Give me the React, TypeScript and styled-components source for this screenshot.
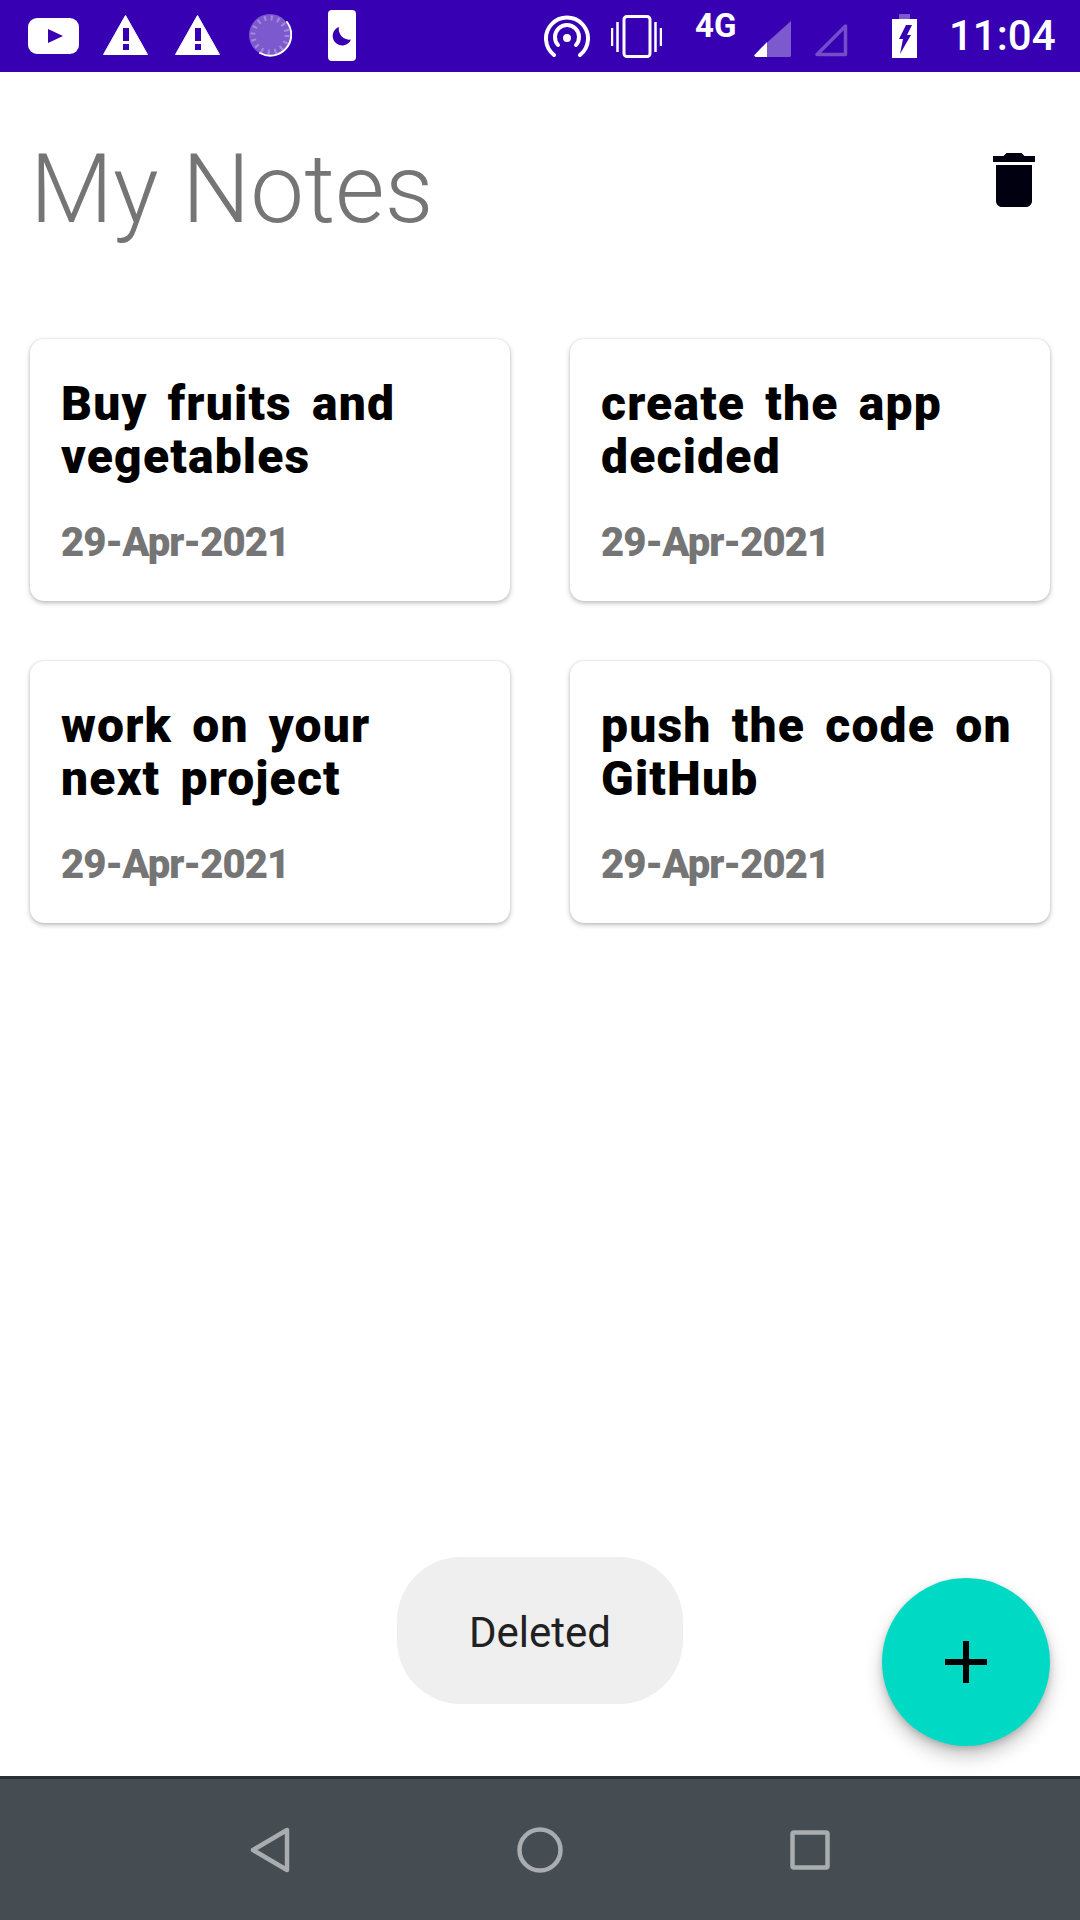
import React from 'react';
import styled, { createGlobalStyle } from 'styled-components';

const notes = [
  { title: 'Buy fruits and vegetables', date: '29-Apr-2021' },
  { title: 'create the app decided', date: '29-Apr-2021' },
  { title: 'work on your next project', date: '29-Apr-2021' },
  { title: 'push the code on GitHub', date: '29-Apr-2021' },
];

const WarningIcon: React.FC<{ $gap: number }> = ({ $gap }) => (
  <StatusIcon $gap={$gap} width={45} height={72} viewBox="0 0 45 72">
    <path d="M22.5 15.500L44.500 54.500H0.500Z" fill="#fff" stroke="#fff" strokeWidth="1" strokeLinejoin="round" />
    <path d="M20 28h6v13h-6zM20 44h6v6h-6z" fill="#3700b3" />
  </StatusIcon>
);

const StatusBar: React.FC = () => (
  <StyledStatusBar>
    <IconGroup>
      <StatusIcon $gap={0} width={51} height={72} viewBox="0 0 51 72">
        <rect x="0" y="18" width="51" height="36" rx="9" fill="#fff" />
        <path d="M20 29l15 7-15 7z" fill="#3700b3" />
      </StatusIcon>
      <WarningIcon $gap={24} />
      <WarningIcon $gap={27} />
      <StatusIcon $gap={29} width={43} height={72} viewBox="0 0 43 72">
        <circle cx="21" cy="35" r="21" fill="#fff" fillOpacity="0.35" />
        <circle cx="21" cy="35" r="17" fill="none" stroke="#fff" strokeOpacity="0.3" strokeWidth="5" strokeDasharray="2 4.7" />
        <path d="M38 22a21 21 0 0 1-27 31" fill="none" stroke="#fff" strokeWidth="2" strokeLinecap="round" />
      </StatusIcon>
      <StatusIcon $gap={36} width={28} height={72} viewBox="0 0 28 72">
        <rect x="0" y="10" width="28" height="51" rx="4" fill="#fff" />
        <path d="M11 27a9.500 9.500 0 1 0 12 12.500a10.500 10.500 0 0 1-12-12.500z" fill="#3700b3" />
      </StatusIcon>
    </IconGroup>
    <IconGroup>
      <StatusIcon $gap={0} width={46} height={72} viewBox="0 0 46 72">
        <g fill="none" stroke="#fff" strokeWidth="4" strokeLinecap="round">
          <path d="M10 55a21 21 0 1 1 26 0" />
          <path d="M14 45a12 12 0 1 1 18 0" />
        </g>
        <circle cx="23" cy="38" r="4" fill="#fff" />
      </StatusIcon>
      <StatusIcon $gap={21} width={51} height={72} viewBox="0 0 51 72">
        <rect x="13" y="16.500" width="26" height="40" rx="3" fill="none" stroke="#fff" strokeWidth="3" />
        <path d="M1 28v18M6.500 22v30M44.500 22v30M50 28v18" stroke="#fff" strokeWidth="2.500" />
      </StatusIcon>
      <NetworkLabel>4G</NetworkLabel>
      <StatusIcon $gap={17} width={37} height={72} viewBox="0 0 37 72">
        <path d="M37 21v34.500a1.500 1.500 0 0 1-1.500 1.500H13V42.500Z" fill="#fff" fillOpacity="0.35" />
        <path d="M0 55.500L13 42v15H1.500z" fill="#fff" />
      </StatusIcon>
      <StatusIcon $gap={20} width={37} height={72} viewBox="0 0 37 72">
        <path d="M34.500 26v28.500H6Z" fill="none" stroke="#fff" strokeOpacity="0.3" strokeWidth="3.500" strokeLinejoin="round" />
      </StatusIcon>
      <StatusIcon $gap={44} width={25} height={72} viewBox="0 0 25 72">
        <rect x="7" y="14" width="11" height="5" fill="#fff" fillOpacity="0.35" />
        <rect x="0" y="19" width="25" height="39" fill="#fff" />
        <path d="M14 25h6l-5 10h4L8 54l3-15H7z" fill="#3700b3" />
      </StatusIcon>
      <Clock>11:04</Clock>
    </IconGroup>
  </StyledStatusBar>
);

const NavBar: React.FC = () => (
  <StyledNavBar>
    <svg width="40" height="46" viewBox="0 0 40 46">
      <path d="M37 3v40L3 23Z" fill="none" stroke="#a9adb0" strokeWidth="4.500" strokeLinejoin="round" />
    </svg>
    <svg width="46" height="46" viewBox="0 0 46 46">
      <circle cx="23" cy="23" r="20.500" fill="none" stroke="#a9adb0" strokeWidth="4.500" />
    </svg>
    <svg width="40" height="40" viewBox="0 0 40 40">
      <rect x="2.500" y="2.500" width="35" height="35" rx="1.500" fill="none" stroke="#a9adb0" strokeWidth="4.500" />
    </svg>
  </StyledNavBar>
);

const App: React.FC = () => {
  return (
    <Page>
      <GlobalStyle />
      <StatusBar />
      <Main>
        <Header>
          <Title>My Notes</Title>
          <TrashIcon width="72" height="72" viewBox="0 0 24 24">
            <path
              d="M6 19c0 1.100.9 2 2 2h8c1.100 0 2-.9 2-2V7H6v12zM19 4h-3.500l-1-1h-5l-1 1H5v2h14V4z"
              fill="#000010"
            />
          </TrashIcon>
        </Header>
        <NotesGrid>
          {notes.map((note) => (
            <NoteCard key={note.title}>
              <NoteTitle>{note.title}</NoteTitle>
              <NoteDate>{note.date}</NoteDate>
            </NoteCard>
          ))}
        </NotesGrid>
        <Toast>Deleted</Toast>
        <Fab>
          <svg width="42" height="42" viewBox="0 0 42 42">
            <path d="M18 0h6v18h18v6H24v18h-6V24H0v-6h18z" fill="#000" />
          </svg>
        </Fab>
      </Main>
      <NavBar />
    </Page>
  );
};

const GlobalStyle = createGlobalStyle`
  html, body {
    margin: 0;
    padding: 0;
    background: #fff;
  }
  body {
    font-family: Roboto, sans-serif;
  }
`;

const Page = styled.div`
  display: flex;
  flex-direction: column;
  width: 1080px;
  height: 1920px;
  overflow: hidden;
`;

const StyledStatusBar = styled.div`
  display: flex;
  align-items: center;
  justify-content: space-between;
  height: 72px;
  padding: 0 25px 0 28px;
  background: #3700b3;
`;

const IconGroup = styled.div`
  display: flex;
  align-items: center;
`;

const StatusIcon = styled.svg<{ $gap: number }>`
  display: block;
  flex: none;
  margin-left: ${(p) => p.$gap}px;
`;

const NetworkLabel = styled.span`
  flex: none;
  width: 42px;
  margin: -20px 0 0 33px;
  color: #fff;
  font-size: 33px;
  font-weight: 700;
  line-height: 36px;
`;

const Clock = styled.span`
  flex: none;
  width: 106px;
  margin-left: 32px;
  color: #fff;
  font-size: 42px;
  font-weight: 500;
  line-height: 50px;
  white-space: nowrap;
`;

const Main = styled.main`
  position: relative;
  flex: 1;
  min-height: 0;
`;

const Header = styled.header`
  display: flex;
  align-items: flex-start;
  justify-content: space-between;
  height: 267px;
  padding: 61px 30px 0;
  box-sizing: border-box;
`;

const Title = styled.h1`
  margin: 0;
  color: #757575;
  font-size: 96px;
  font-weight: 300;
  line-height: 112px;
`;

const TrashIcon = styled.svg`
  margin-top: 11px;
`;

const NotesGrid = styled.div`
  display: grid;
  grid-template-columns: repeat(2, 480px);
  gap: 60px;
  padding: 0 30px;
`;

const NoteCard = styled.article`
  display: flex;
  flex-direction: column;
  height: 262px;
  padding: 38px 30px 0 31px;
  box-sizing: border-box;
  border-radius: 14px;
  background: #fff;
  box-shadow: 0 2px 5px rgba(0, 0, 0, 0.26), 0 0 2px rgba(0, 0, 0, 0.12);
`;

const NoteTitle = styled.h2`
  margin: 0;
  color: #000;
  font-size: 48px;
  font-weight: 900;
  line-height: 53px;
  letter-spacing: 1.2px;
  word-spacing: 7px;
`;

const NoteDate = styled.div`
  margin-top: 36px;
  color: #757575;
  font-size: 40px;
  font-weight: 900;
  line-height: 47px;
  letter-spacing: -1px;
`;

const Toast = styled.div`
  position: absolute;
  left: 397px;
  top: 1485px;
  display: flex;
  align-items: center;
  justify-content: center;
  width: 286px;
  height: 147px;
  padding-top: 4px;
  box-sizing: border-box;
  border-radius: 64px;
  background: #efefef;
  color: #212121;
  font-size: 42px;
  line-height: 50px;
`;

const Fab = styled.button`
  position: absolute;
  left: 882px;
  top: 1506px;
  display: flex;
  align-items: center;
  justify-content: center;
  width: 168px;
  height: 168px;
  padding: 0;
  border: 0;
  border-radius: 50%;
  background: #00dac5;
  box-shadow: 0 10px 18px rgba(0, 0, 0, 0.22), 0 3px 6px rgba(0, 0, 0, 0.16);
`;

const StyledNavBar = styled.nav`
  display: flex;
  align-items: center;
  justify-content: center;
  gap: 227px;
  height: 144px;
  box-sizing: border-box;
  border-top: 3px solid #2a2f33;
  background: #454c52;
`;

export default App;
